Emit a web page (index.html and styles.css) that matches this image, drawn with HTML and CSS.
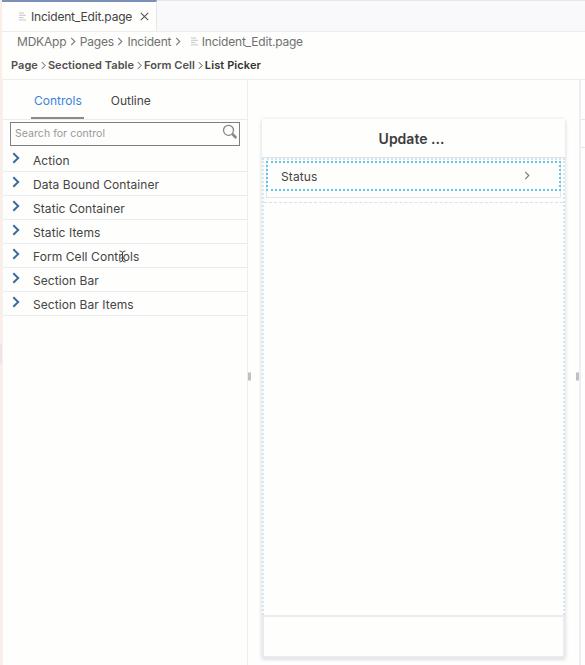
FILE: index.html
```html
<!DOCTYPE html>
<html lang="en">
<head>
<meta charset="utf-8">
<title>Incident_Edit.page</title>
<link rel="stylesheet" href="styles.css">
</head>
<body>
<svg class="defs" width="0" height="0">
  <symbol id="file" viewBox="0 0 8 9"><path d="M1 1h5M1 3.3h7M1 5.6h4.500M1 7.900h7" fill="none" stroke="currentColor"/></symbol>
  <symbol id="sep" viewBox="0 0 6 10"><path d="M1 1l4 4-4 4" fill="none" stroke="currentColor" stroke-width="1.2"/></symbol>
  <symbol id="chev" viewBox="0 0 8 12"><path d="M1.3 1.2L6.2 6l-4.900 4.800" fill="none" stroke="currentColor" stroke-width="1.9"/></symbol>
</svg>
<div class="app">
  <i class="edge-marker"></i>
  <header class="tabbar">
    <div class="file-tab">
      <svg class="file-icon"><use href="#file"/></svg>
      <span class="file-name">Incident_Edit.page</span>
      <svg class="close" viewBox="0 0 9 9"><path d="M.8.8l7.4 7.4M8.2.8L.8 8.2" fill="none" stroke="currentColor" stroke-width="1.1"/></svg>
    </div>
  </header>
  <nav class="path">
    <span>MDKApp</span><svg class="sep"><use href="#sep"/></svg>
    <span>Pages</span><svg class="sep"><use href="#sep"/></svg>
    <span>Incident</span><svg class="sep"><use href="#sep"/></svg>
    <svg class="file-icon"><use href="#file"/></svg><span class="path-file">Incident_Edit.page</span>
  </nav>
  <nav class="crumbs">
    <span>Page</span><svg class="crumb-sep"><use href="#sep"/></svg>
    <span>Sectioned Table</span><svg class="crumb-sep"><use href="#sep"/></svg>
    <span>Form Cell</span><svg class="crumb-sep"><use href="#sep"/></svg>
    <span class="current">List Picker</span>
  </nav>
  <main class="workspace">
    <aside class="palette">
      <div class="tabs">
        <div class="tab active">Controls</div>
        <div class="tab">Outline</div>
      </div>
      <div class="search">
        <span>Search for control</span>
        <svg class="lens" viewBox="0 0 16 16"><circle cx="6.5" cy="6.3" r="5" fill="none" stroke="currentColor" stroke-width="1.3"/><path d="M10.3 10l4 4" stroke="currentColor" stroke-width="2.5"/></svg>
      </div>
      <ul class="groups">
        <li><svg><use href="#chev"/></svg><span>Action</span></li>
        <li><svg><use href="#chev"/></svg><span>Data Bound Container</span></li>
        <li><svg><use href="#chev"/></svg><span>Static Container</span></li>
        <li><svg><use href="#chev"/></svg><span>Static Items</span></li>
        <li><svg><use href="#chev"/></svg><span>Form Cell Controls</span></li>
        <li><svg><use href="#chev"/></svg><span>Section Bar</span></li>
        <li><svg><use href="#chev"/></svg><span>Section Bar Items</span></li>
      </ul>
      <svg class="cursor" viewBox="0 0 7 13"><path d="M.5 1Q3.500 1 3.500 3Q3.500 1 6.500 1M3.500 2.500v8M.5 12Q3.500 12 3.500 10Q3.500 12 6.500 12M2 8h3" fill="none" stroke="currentColor"/></svg>
    </aside>
    <section class="canvas">
      <i class="grip"></i>
      <div class="device">
        <div class="title">Update ...</div>
        <div class="body">
          <div class="section">
            <div class="cell-group">
              <div class="cell"><span>Status</span><svg class="more"><use href="#sep"/></svg></div>
            </div>
          </div>
        </div>
        <div class="footer"></div>
      </div>
      <i class="grip"></i>
    </section>
    <aside class="properties"><div class="prop-head"></div><div class="prop-row"></div></aside>
  </main>
</div>
</body>
</html>
```

FILE: styles.css
```css
* { box-sizing: border-box; }
body { margin: 0; background: #fefefd; color: #444; font: 12px Inter, "Liberation Sans", sans-serif; overflow: hidden; }
.defs { position: absolute; }
svg { display: block; flex: none; }
span { white-space: nowrap; }
.app { position: relative; width: 585px; height: 665px; border-left: 2px solid #fbeee6; display: flex; flex-direction: column; }
.edge-marker { position: absolute; left: -2px; top: 344px; width: 2px; height: 20px; background: #ece4ea; }
.tabbar { height: 32px; flex: none; background: #f9f9fc; border-top: 1px solid #eae5e2; border-bottom: 1px solid #eeeceb; display: flex; }
.file-tab { width: 155px; height: 31px; margin-top: -1px; padding: 0 0 1px 16px; background: #fefefd; border-top: 2px solid #7c8fb9; border-right: 1px solid #e8e7e8; display: flex; align-items: center; }
.file-icon { width: 8px; height: 9px; color: #c6c6c6; }
.file-name { width: 101px; margin-left: 5px; letter-spacing: -.2px; color: #444; }
.close { width: 9px; height: 9px; margin-left: 8px; color: #555; }
.path { height: 20px; flex: none; padding: 0 0 2px 15px; display: flex; align-items: center; color: #707070; letter-spacing: -.2px; }
.sep { width: 6px; height: 9px; margin: 0 4px 0 3.5px; color: #777; }
.path .file-icon { margin: 0 4px 0 5px; }
.crumbs { height: 28px; flex: none; padding: 0 0 1px 9px; border-bottom: 1px solid #ededed; display: flex; align-items: center; font-size: 11px; font-weight: 600; color: #505050; letter-spacing: .05px; }
.crumb-sep { width: 5px; height: 9px; margin: 0 2px 0 3px; }
.current { color: #333; letter-spacing: .1px; }
.workspace { flex: 1; display: flex; min-height: 0; }
.palette { width: 246px; flex: none; position: relative; border-right: 1px solid #ededee; border-left: 1px solid #f1f2f7; }
.tabs { height: 40px; border-bottom: 1px solid #ececee; display: flex; padding-left: 28px; gap: 24px; }
.tab { height: 39px; padding: 0 2px 0 3px; line-height: 41px; font-size: 12px; color: #444; }
.active { color: #3984dd; border-bottom: 2px solid #8b8b8d; }
.search { width: 230px; height: 24px; margin: 2px 0 0 7px; border: 1px solid #808080; padding: 0 0 1px 4px; display: flex; align-items: center; justify-content: space-between; font-size: 10.5px; letter-spacing: .05px; color: #999; }
.lens { width: 16px; height: 16px; margin: -4px 1px 0 0; color: #888; }
.groups { list-style: none; margin: 2px 0 0; padding: 0; }
.groups li { height: 24px; border-bottom: 1px solid #e9ebf0; padding: 1px 0 0 9px; display: flex; align-items: center; gap: 13px; font-size: 12px; letter-spacing: .07px; }
.groups svg { width: 8px; height: 12px; margin-top: -4px; color: #396999; }
.cursor { position: absolute; left: 116px; top: 170px; width: 7px; height: 13px; color: #444; }
.canvas { flex: 1; display: flex; }
.grip { width: 3px; height: 9px; margin-top: 292px; background: #c0c0c0; flex: none; border: 1px solid #dedede; border-width: 1px 0; }
.device { width: 303px; height: 539px; margin: 39px 11px 0 11px; box-shadow: 0 1px 4px #d2d2d8; background: #fefefd; display: flex; flex-direction: column; }
.title { height: 39px; flex: none; border-bottom: 1px solid #dde2e5; line-height: 40px; text-align: center; font-size: 14px; font-weight: 600; padding-right: 4px; color: #3d3d3d; }
.body { flex: 1; border: 2px dotted #d0e6ef; border-bottom: 0; }
.section { height: 43px; padding: 1px 2px 4px; border-bottom: 1px dashed #cfe5ee; }
.cell-group { height: 37px; border: 1px solid #e6e6ea; border-top: 0; }
.cell { height: 30px; margin: 0 -1px; border: 2px dotted #66c6ee; padding: 0 29px 0 13px; display: flex; align-items: center; justify-content: space-between; letter-spacing: .1px; }
.more { width: 6px; height: 9px; margin-top: -2px; color: #777; }
.footer { height: 43px; border: 2px solid #ebebef; }
.properties { width: 6px; flex: none; border-left: 2px solid #eeeef4; }
.prop-head { height: 40px; border-bottom: 1px solid #e8e8ea; }
.prop-row { height: 28px; border-bottom: 1px solid #e8e8ea; }
```
